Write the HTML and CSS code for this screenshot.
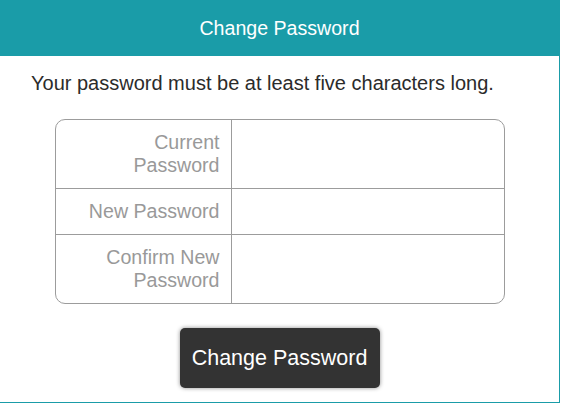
FILE: index.html
```html
<!DOCTYPE html>
<html>
<head>
<meta charset="utf-8">
<link rel="stylesheet" href="styles.css">
</head>
<body>
<div class="dialog">
  <div class="header">Change Password</div>
  <p class="message">Your password must be at least five characters long.</p>
  <div class="fields">
    <label class="label">Current<br>Password</label>
    <div class="input"></div>
    <label class="label">New Password</label>
    <div class="input"></div>
    <label class="label last">Confirm New<br>Password</label>
    <div class="input last"></div>
  </div>
  <div class="actions">
    <button class="button">Change Password</button>
  </div>
</div>
</body>
</html>
```
FILE: styles.css
```css
html, body {
  margin: 0;
  padding: 0;
  background: #fff;
}
body {
  font-family: "Liberation Sans", Arial, sans-serif;
  overflow: hidden;
}
.dialog {
  box-sizing: border-box;
  width: 561px;
  height: 403px;
  margin-left: -1px;
  border: 1px solid #1a9ca8;
  display: flex;
  flex-direction: column;
}
.header {
  height: 55px;
  line-height: 55px;
  background: #1a9ca8;
  color: #fff;
  font-size: 19.6px;
  text-align: center;
}
.message {
  margin: 16px 0 0 31px;
  font-size: 20px;
  line-height: 23px;
  color: #2b2b2b;
}
.fields {
  box-sizing: border-box;
  width: 450px;
  margin: 24px auto 0;
  border: 1px solid #9c9c9c;
  border-radius: 10px;
  overflow: hidden;
  display: grid;
  grid-template-columns: 176px 1fr;
}
.label {
  box-sizing: border-box;
  padding: 11px 11px 11px 10px;
  text-align: right;
  font-size: 19.6px;
  line-height: 23px;
  color: #999;
  border-right: 1px solid #9c9c9c;
  border-bottom: 1px solid #9c9c9c;
}
.input {
  border-bottom: 1px solid #9c9c9c;
}
.label.last, .input.last {
  border-bottom: none;
}
.actions {
  display: flex;
  justify-content: center;
  margin-top: 24px;
}
.button {
  box-sizing: border-box;
  height: 60px;
  width: 200px;
  padding: 0;
  border: none;
  border-radius: 5px;
  background: #333;
  color: #fff;
  font-family: "Liberation Sans", Arial, sans-serif;
  font-size: 21.5px;
  box-shadow: 0 0 4px rgba(0, 0, 0, 0.45);
}
```
